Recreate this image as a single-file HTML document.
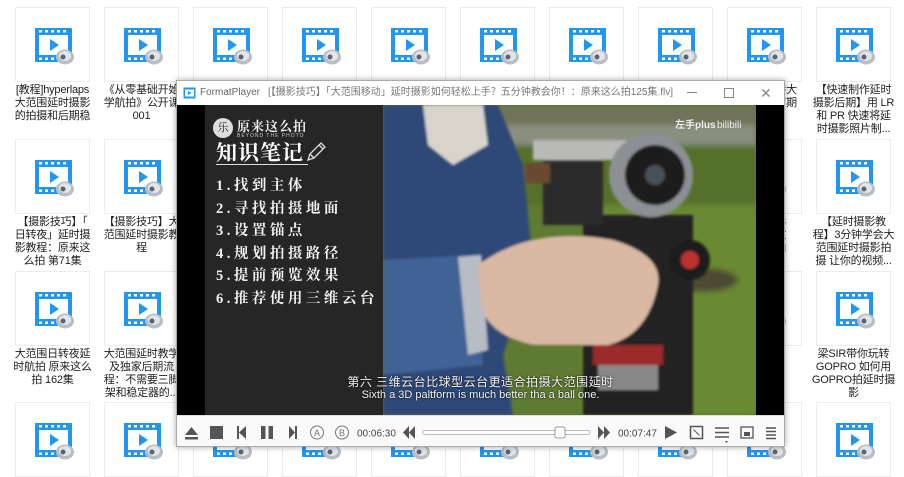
<!DOCTYPE html>
<html><head><meta charset="utf-8">
<style>
*{margin:0;padding:0;box-sizing:border-box}
body{width:904px;height:465px;overflow:hidden;background:#fff;position:relative;font-family:"Liberation Sans","Noto Sans CJK SC",sans-serif}
.t{position:absolute;width:75px;height:75px;border:1px solid #ececec;background:#fff}
.t svg{position:absolute;left:19px;top:19px}
.l{position:absolute;width:89px;font-size:11px;line-height:13px;color:#222;text-align:center;white-space:nowrap;letter-spacing:-0.2px}
#win{position:absolute;left:176px;top:80px;width:609px;height:367px;background:#fff;border:1px solid #aaa;box-shadow:0 0 6px rgba(0,0,0,.35)}
#tb{position:absolute;left:0;top:0;width:607px;height:24px;font-size:11px;color:#555;line-height:24px}
#vid{position:absolute;left:0;top:24px;width:607px;height:310px;background:#000;overflow:hidden}
#ctl{position:absolute;left:0;top:334px;width:607px;height:31px;background:#fafafa;border-top:1px solid #ddd}
.ser{font-family:"Liberation Serif","Noto Serif CJK SC",serif}
</style></head><body>
<svg width="0" height="0" style="position:absolute"><defs>
<g id="vi"><rect x="0" y="1" width="37" height="34" fill="#2196f3"/><rect x="4" y="8" width="29" height="20" fill="#fff"/>
<g fill="#fff"><rect x="4" y="3" width="3" height="2.5"/><rect x="10" y="3" width="3" height="2.5"/><rect x="16" y="3" width="3" height="2.5"/><rect x="22" y="3" width="3" height="2.5"/><rect x="28" y="3" width="3" height="2.5"/><rect x="4" y="30.5" width="3" height="2.5"/><rect x="10" y="30.5" width="3" height="2.5"/><rect x="16" y="30.5" width="3" height="2.5"/></g>
<path d="M15 12 L24 18 L15 24Z" fill="#2196f3"/>
<ellipse cx="30" cy="30" rx="9" ry="7.5" fill="#b8bec4"/><ellipse cx="30" cy="29" rx="6" ry="5" fill="#e2e6ea"/><circle cx="28" cy="30" r="2.5" fill="#5a6470"/></g>
</defs></svg>

<div id="grid"></div>
<script>
var cols=[15,104,193,282,371,460,549,638,727,816],rows=[7,139,271,402],h='';
for(var r=0;r<4;r++)for(var c=0;c<10;c++){h+='<div class="t" style="left:'+cols[c]+'px;top:'+rows[r]+'px"><svg width="40" height="40"><use href="#vi"/></svg></div>';}
document.getElementById('grid').innerHTML=h;
</script>
<div class="l" style="left:8px;top:84px">[教程]hyperlaps<br>大范围延时摄影<br>的拍摄和后期稳</div>
<div class="l" style="left:97px;top:84px">《从零基础开始<br>学航拍》公开课<br>001</div>
<div class="l" style="left:720px;top:84px">延时摄影特大<br>范围延时前期</div>
<div class="l" style="left:809px;top:84px">【快速制作延时<br>摄影后期】用 LR<br>和 PR 快速将延<br>时摄影照片制...</div>
<div class="l" style="left:8px;top:216px">【摄影技巧】「<br>日转夜」延时摄<br>影教程：原来这<br>么拍 第71集</div>
<div class="l" style="left:97px;top:216px">【摄影技巧】大<br>范围延时摄影教<br>程</div>
<div class="l" style="left:720px;top:216px">延时摄影<br>三分钟教<br>无人机拍</div>
<div class="l" style="left:809px;top:216px">【延时摄影教<br>程】3分钟学会大<br>范围延时摄影拍<br>摄 让你的视频...</div>
<div class="l" style="left:8px;top:348px">大范围日转夜延<br>时航拍 原来这么<br>拍 162集</div>
<div class="l" style="left:97px;top:348px">大范围延时教学<br>及独家后期流<br>程：不需要三脚<br>架和稳定器的...</div>
<div class="l" style="left:720px;top:348px">航拍延<br>时凡人<br>后期</div>
<div class="l" style="left:809px;top:348px">梁SIR带你玩转<br>GOPRO 如何用<br>GOPRO拍延时摄<br>影</div>

<div id="win">
 <div id="tb">
  <svg style="position:absolute;left:6px;top:6px" width="13" height="12"><rect x="0.5" y="0.5" width="12" height="11" fill="#2196f3"/><rect x="2" y="2.5" width="9" height="7" fill="#fff"/><path d="M5 4 L8.5 6 L5 8Z" fill="#2196f3"/></svg>
  <span style="position:absolute;left:23px;font-size:10px;color:#666">FormatPlayer</span>
  <span style="position:absolute;left:91px;font-size:10px;color:#777;white-space:nowrap">[【摄影技巧】「大范围移动」延时摄影如何轻松上手？五分钟教会你！：原来这么拍125集.flv]</span>
  <span style="position:absolute;left:510px;top:11px;width:10px;height:1px;background:#888"></span>
  <span style="position:absolute;left:547px;top:7px;width:10px;height:10px;border:1px solid #888"></span>
  <span style="position:absolute;left:583px;font-size:14px;color:#888">✕</span>
 </div>
 <div id="vid">
  <div style="position:absolute;left:28px;top:0;width:178px;height:310px;background:#262626"></div>
  <div style="position:absolute;left:36px;top:13px;width:20px;height:20px;border-radius:50%;background:#ddd;color:#222;font-size:11px;line-height:20px;text-align:center" class="ser">乐</div>
  <div class="ser" style="position:absolute;left:60px;top:11px;color:#eee;font-size:13px;font-weight:bold;letter-spacing:1px">原来这么拍</div>
  <div style="position:absolute;left:60px;top:28px;color:#ccc;font-size:5px;letter-spacing:1px">BEYOND THE PHOTO</div>
  <div class="ser" style="position:absolute;left:39px;top:32px;color:#fff;font-size:21px;font-weight:bold;letter-spacing:1px">知识笔记</div>
  <div style="position:absolute;left:39px;top:59px;width:92px;height:1px;background:#ddd"></div>
  <svg style="position:absolute;left:128px;top:36px" width="22" height="22"><path d="M3 19 L5 13 L16 2 L20 6 L9 17Z M5 13 L9 17 M14 4 L18 8" fill="none" stroke="#ddd" stroke-width="1.3"/></svg>
  <div class="ser" style="position:absolute;left:39px;top:70px;color:#f2f2f2;font-size:14.5px;font-weight:bold;letter-spacing:3.5px;line-height:22.6px;white-space:nowrap">1.找到主体<br>2.寻找拍摄地面<br>3.设置锚点<br>4.规划拍摄路径<br>5.提前预览效果<br>6.推荐使用三维云台</div>
  <svg style="position:absolute;left:206px;top:0" width="373" height="310">
   <defs><filter id="b"><feGaussianBlur stdDeviation="3"/></filter><filter id="b2"><feGaussianBlur stdDeviation="1.2"/></filter></defs>
   <rect width="373" height="310" fill="#5f7a33"/>
   <g filter="url(#b)">
    <rect x="100" y="0" width="273" height="35" fill="#6f7358"/>
    <rect x="120" y="20" width="253" height="25" fill="#8a8f80"/>
    <rect x="200" y="80" width="173" height="230" fill="#698a30"/>
    <rect x="130" y="40" width="243" height="60" fill="#54702a"/>
    <ellipse cx="320" cy="175" rx="35" ry="12" fill="#4e4a30"/>
   </g>
   <g filter="url(#b2)">
    <path d="M0 0 L115 0 L140 60 L150 160 L120 250 L130 310 L0 310Z" fill="#2e4a78"/>
    <path d="M0 155 L90 150 L100 260 L0 270Z" fill="#3f6294"/>
    <path d="M40 0 L100 0 L105 40 L70 60 L45 40Z" fill="#d8d4cc"/>
    <path d="M75 152 L98 150 L105 245 L85 250Z" fill="#b8bcc4"/>
    <rect x="200" y="110" width="110" height="200" fill="#222"/>
    <rect x="210" y="240" width="70" height="20" fill="#9b2a2c"/>
    <rect x="215" y="260" width="60" height="25" fill="#888"/>
    <rect x="160" y="40" width="60" height="80" fill="#2a2a2a"/>
    <rect x="150" y="35" width="120" height="20" fill="#b9b9b6"/>
    <circle cx="268" cy="70" r="42" fill="#8c8f93"/>
    <circle cx="272" cy="70" r="30" fill="#1c1c1e"/>
    <circle cx="272" cy="70" r="10" fill="#4a5058"/>
    <rect x="142" y="58" width="25" height="20" fill="#6a4a30"/>
    <circle cx="307" cy="155" r="20" fill="#1a1a1a"/>
    <circle cx="307" cy="155" r="9" fill="#b33"/>
    <path d="M95 160 Q150 120 230 135 Q280 150 275 180 Q265 230 225 240 L150 240 Q105 230 98 200Z" fill="#d9b8a4"/>
   </g>
   <text x="292" y="23" fill="#eee" font-size="10" font-family="Liberation Sans,Noto Sans CJK SC,sans-serif" font-weight="bold">左手plus</text>
   <text x="334" y="23" fill="#eee" font-size="10" font-family="Liberation Sans,sans-serif">bilibili</text>
  </svg>
  <div style="position:absolute;left:579px;top:0;width:28px;height:310px;background:#000"></div>
  <div style="position:absolute;left:0;top:268px;width:607px;text-align:center;color:#f4f4f4;font-size:12px;text-shadow:0 0 2px #000;letter-spacing:.5px">第六 三维云台比球型云台更适合拍摄大范围延时</div>
  <div style="position:absolute;left:0;top:284px;width:607px;text-align:center;color:#f4f4f4;font-size:11px;text-shadow:0 0 2px #000">Sixth  a 3D paltform is much better tha a ball one.</div>
 </div>
 <div id="ctl">
  <svg width="607" height="31" style="position:absolute;left:0;top:0">
   <g fill="#555">
    <path d="M8 19 L14.5 11 L21 19Z"/><rect x="8" y="21" width="13" height="2.5"/>
    <rect x="33" y="10" width="13" height="13"/>
    <rect x="60" y="10" width="2" height="13"/><path d="M69 10 L62 16.5 L69 23Z"/>
    <rect x="84" y="10" width="4.5" height="13"/><rect x="91.5" y="10" width="4.5" height="13"/>
    <path d="M112 10 L118 16.5 L112 23Z"/><rect x="118" y="10" width="2" height="13"/>
    <path d="M232 16.5 L238 10 L238 23Z M226 16.5 L232 10 L232 23Z"/>
    <path d="M421 10 L427 16.5 L421 23Z M427 10 L433 16.5 L427 23Z"/>
    <path d="M488 10 L500 16.5 L488 23Z"/>
   </g>
   <g fill="none" stroke="#777" stroke-width="1">
    <circle cx="140" cy="16.5" r="6.5"/><circle cx="165" cy="16.5" r="6.5"/>
    <rect x="513.5" y="10.5" width="12" height="12" stroke="#555" stroke-width="1.5"/>
    <path d="M516.5 13.5 L522.5 19.5" stroke="#555"/>
    <path d="M538 12 H552 M538 16.5 H552 M538 21 H552" stroke="#555" stroke-width="1.5"/>
    <rect x="564" y="11" width="12" height="11" stroke="#555" stroke-width="1.3"/>
    <path d="M589 12 H599 M589 15.5 H599 M589 19 H599 M589 22.5 H599" stroke="#555" stroke-width="1.5"/>
   </g>
   <text x="140" y="20" font-size="9" fill="#777" text-anchor="middle" font-family="Liberation Sans,sans-serif">A</text>
   <text x="165" y="20" font-size="9" fill="#777" text-anchor="middle" font-family="Liberation Sans,sans-serif">B</text>
   <rect x="567" y="16" width="6" height="4" fill="#555"/>
   <rect x="246" y="14.5" width="167" height="4" rx="2" fill="#fff" stroke="#bbb"/>
   <rect x="378" y="11" width="10" height="11" rx="2" fill="#fff" stroke="#999"/>
   <text x="180" y="20.5" font-size="10" fill="#444" font-family="Liberation Sans,sans-serif">00:06:30</text>
   <text x="441" y="20.5" font-size="10" fill="#444" font-family="Liberation Sans,sans-serif">00:07:47</text>
   <path d="M548 25 L551 25 L549.5 27Z" fill="#555"/>
  </svg>
 </div>
</div>
</body></html>
